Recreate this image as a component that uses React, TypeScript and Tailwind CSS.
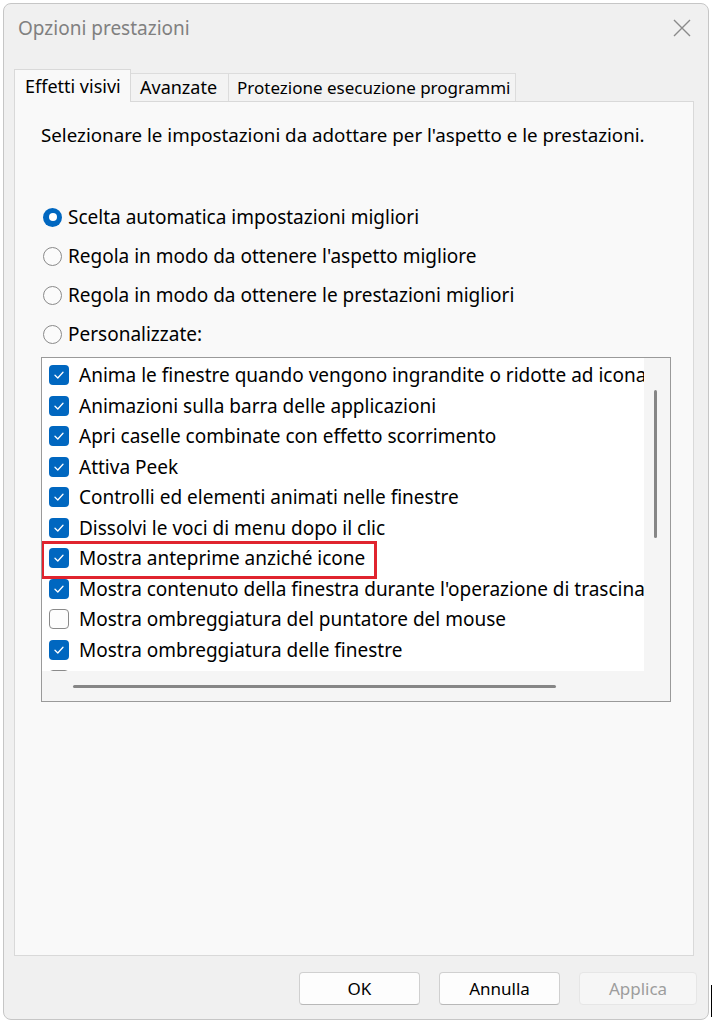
import React from "react";

/* DATA */
type Option = { label: string; checked: boolean; marked?: boolean };

const radios = [
  { label: "Scelta automatica impostazioni migliori", selected: true },
  { label: "Regola in modo da ottenere l'aspetto migliore", selected: false },
  { label: "Regola in modo da ottenere le prestazioni migliori", selected: false },
  { label: "Personalizzate:", selected: false },
];

const options: Option[] = [
  { label: "Anima le finestre quando vengono ingrandite o ridotte ad icona", checked: true },
  { label: "Animazioni sulla barra delle applicazioni", checked: true },
  { label: "Apri caselle combinate con effetto scorrimento", checked: true },
  { label: "Attiva Peek", checked: true },
  { label: "Controlli ed elementi animati nelle finestre", checked: true },
  { label: "Dissolvi le voci di menu dopo il clic", checked: true },
  { label: "Mostra anteprime anziché icone", checked: true, marked: true },
  { label: "Mostra contenuto della finestra durante l'operazione di trascinamento", checked: true },
  { label: "Mostra ombreggiatura del puntatore del mouse", checked: false },
  { label: "Mostra ombreggiatura delle finestre", checked: true },
  { label: "Mostra rettangolo di selezione trasparente", checked: false },
];

const font = { fontFamily: '"Noto Sans", "Segoe UI", sans-serif' };

function Radio({ selected }: { selected: boolean }) {
  if (selected) {
    return (
      <span className="flex h-[19px] w-[19px] shrink-0 items-center justify-center rounded-full bg-[#0067c0]">
        <span className="h-[8px] w-[8px] rounded-full bg-white" />
      </span>
    );
  }
  return <span className="h-[19px] w-[19px] shrink-0 rounded-full border border-[#8a8a8a] bg-[#fbfbfb]" />;
}

function Checkbox({ checked }: { checked: boolean }) {
  if (!checked) {
    return <span className="h-[20px] w-[20px] shrink-0 rounded-[4px] border border-[#8a8a8a] bg-[#fdfdfd]" />;
  }
  return (
    <span className="flex h-[20px] w-[20px] shrink-0 items-center justify-center rounded-[4px] bg-[#0067c0]">
      <svg width="14" height="14" viewBox="0 0 14 14" fill="none">
        <path d="M3 7.3 L5.8 10 L11 4.2" stroke="white" strokeWidth="1.3" strokeLinecap="round" strokeLinejoin="round" />
      </svg>
    </span>
  );
}

function Button({ label, disabled }: { label: string; disabled?: boolean }) {
  return (
    <button
      className={
        disabled
          ? "h-[33px] w-[118px] rounded-[4px] border border-[#e6e6e6] bg-[#f6f6f6] text-[17px] text-[#9d9d9d]"
          : "h-[33px] w-[121px] rounded-[4px] border border-[#d0d0d0] border-b-[#b8b8b8] bg-[#fdfdfd] text-[17px] text-black"
      }
    >
      {label}
    </button>
  );
}

export default function App() {
  return (
    <div className="flex min-h-screen items-start bg-white pl-[3px] pt-[3px]" style={font}>
      <div className="flex h-[1017px] w-[706px] flex-col rounded-[8px] border border-[#c6c6c6] bg-[#f0f0f0]">
        {/* TITLE */}
        <div className="flex h-[48px] items-center justify-between pl-[14px] pr-[17px]">
          <span className="text-[19px] text-[#808080]">Opzioni prestazioni</span>
          <svg width="18" height="18" viewBox="0 0 18 18">
            <path d="M1 1 L17 17 M17 1 L1 17" stroke="#8a8a8a" strokeWidth="1.4" />
          </svg>
        </div>

        {/* TABS */}
        <div className="ml-[10px] mt-[16px] flex h-[33px] items-end">
          <div className="relative z-10 -mb-px flex h-[33px] w-[117px] items-center border border-b-0 border-[#d9d9d9] bg-[#f9f9f9] pl-[10px] text-[18px] text-black">
            Effetti visivi
          </div>
          <div className="flex h-[28px] w-[98px] items-center border border-l-0 border-b-0 border-[#dcdcdc] bg-[#f3f3f3] pl-[9px] text-[18px] text-black">
            Avanzate
          </div>
          <div className="flex h-[28px] w-[287px] items-center border border-l-0 border-b-0 border-[#dcdcdc] bg-[#f3f3f3] pl-[8px] text-[17px] text-black">
            Protezione esecuzione programmi
          </div>
        </div>

        {/* PANEL */}
        <div className="ml-[10px] h-[855px] w-[680px] border border-[#d9d9d9] bg-[#f9f9f9] pl-[26px] pt-[20px]">
          <p className="text-[18.75px] leading-[26px] text-black">
            Selezionare le impostazioni da adottare per l'aspetto e le prestazioni.
          </p>

          <div className="mt-[56px] flex flex-col gap-[13px]">
            {radios.map((r) => (
              <div key={r.label} className="flex h-[26px] items-center gap-[6px] pl-[2px] text-[19px] text-black">
                <Radio selected={r.selected} />
                <span>{r.label}</span>
              </div>
            ))}
          </div>

          {/* LIST */}
          <div className="mt-[10px] grid h-[345px] w-[630px] grid-cols-[1fr_26px] grid-rows-[1fr_30px] border border-[#9a9a9a] bg-white">
            <div className="overflow-hidden pt-[2px]">
              {options.map((o) => (
                <div key={o.label} className="relative flex h-[30.5px] items-center gap-[10px] whitespace-nowrap pl-[7px] text-[19px] text-black">
                  <Checkbox checked={o.checked} />
                  <span>{o.label}</span>
                  {o.marked && (
                    <span className="pointer-events-none absolute left-[-1px] top-[-2px] h-[38px] w-[336px] border-[3px] border-[#e0242e]" />
                  )}
                </div>
              ))}
            </div>
            <div className="flex bg-[#f5f5f5] pl-[10px] pt-[32px]">
              <span className="h-[148px] w-[3px] rounded-full bg-[#868686]" />
            </div>
            <div className="flex items-center bg-[#f5f5f5] pl-[31px]">
              <span className="h-[3px] w-[483px] rounded-full bg-[#868686]" />
            </div>
            <div className="bg-[#f5f5f5]" />
          </div>
        </div>

        {/* BUTTONS */}
        <div className="mr-[11px] mt-[16px] flex justify-end gap-[19px]">
          <Button label="OK" />
          <Button label="Annulla" />
          <Button label="Applica" disabled />
        </div>
      </div>
      <span className="ml-[2px] mt-[982px] h-[32px] w-px bg-black" />
    </div>
  );
}
